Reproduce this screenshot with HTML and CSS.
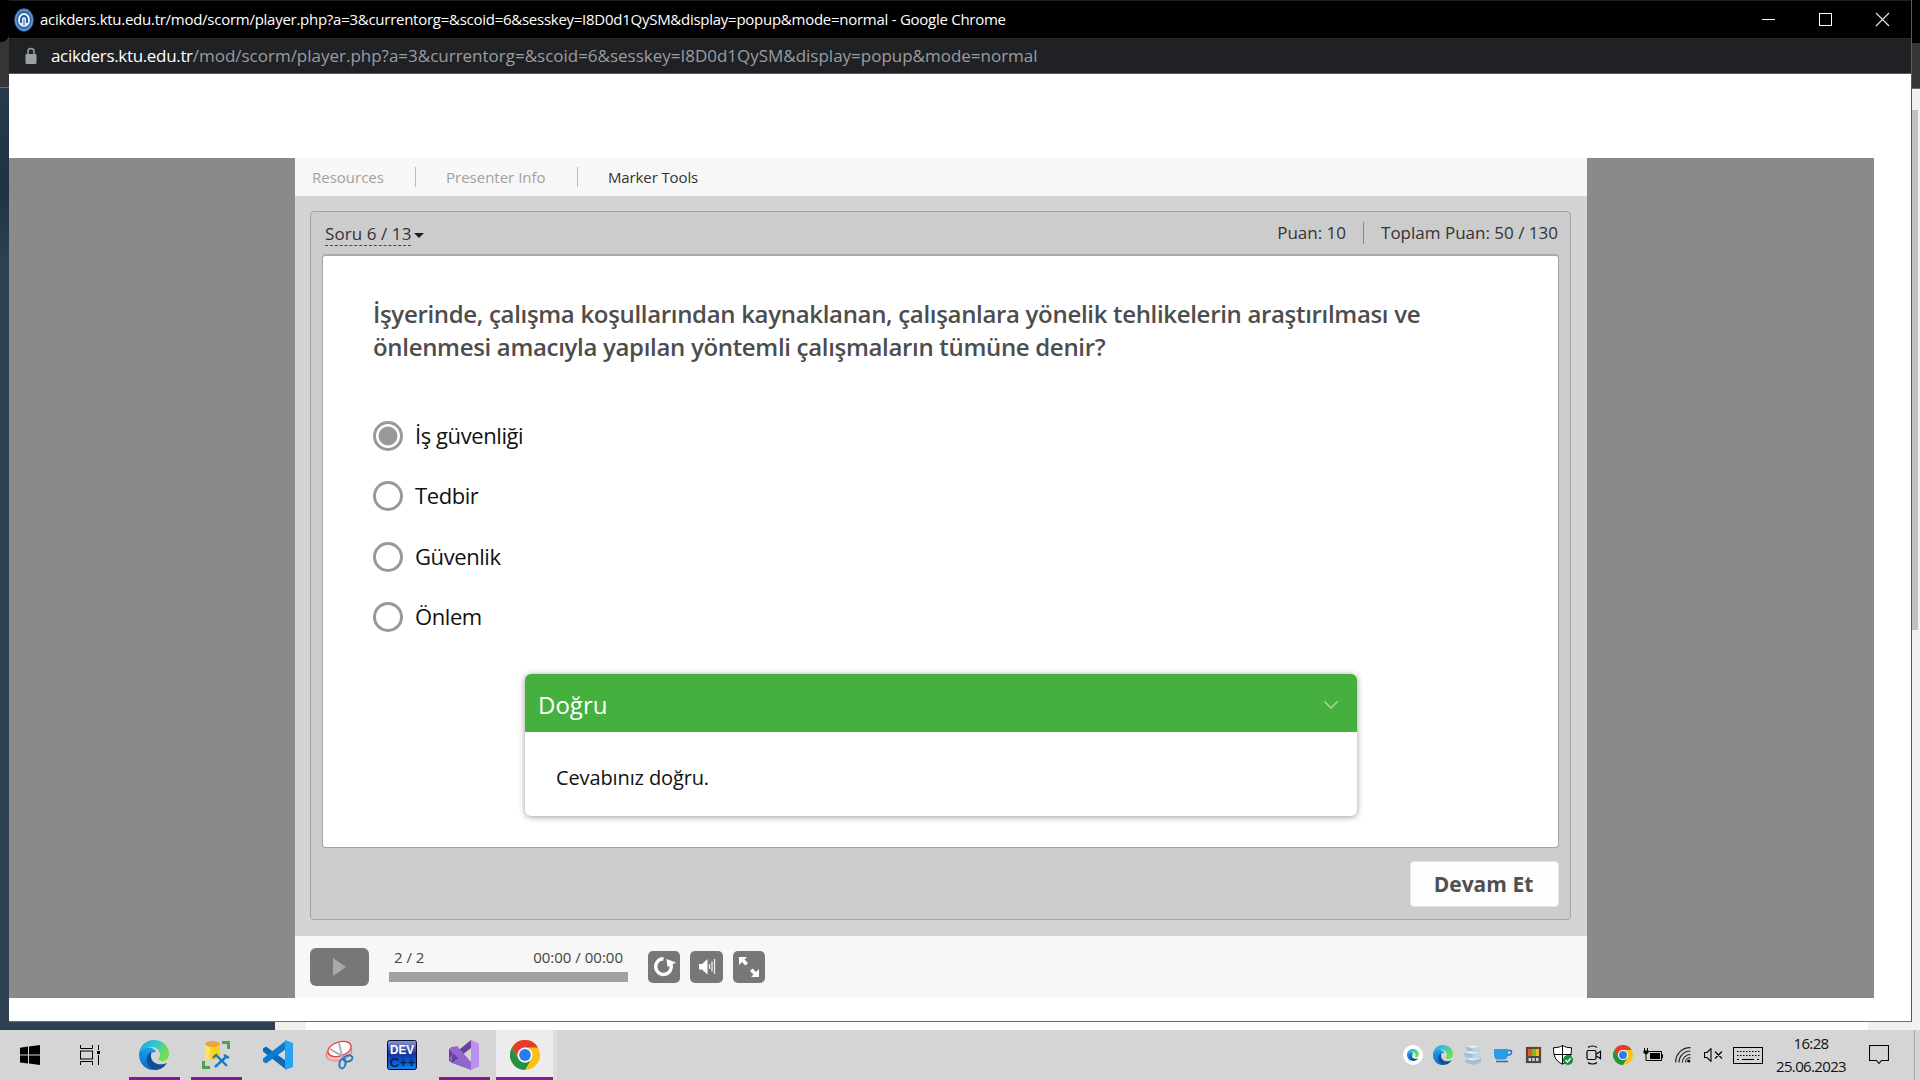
FILE: index.html
```html
<!DOCTYPE html>
<html lang="tr">
<head>
<meta charset="utf-8">
<title>acikders.ktu.edu.tr</title>
<link rel="stylesheet" href="styles.css">
</head>
<body>
<svg width="0" height="0" class="defs" aria-hidden="true">
  <defs>
    <linearGradient id="edgeTop" x1="0" y1="0" x2="1" y2="0.5"><stop offset="0" stop-color="#1d9fdc"/><stop offset="0.5" stop-color="#35c5d3"/><stop offset="1" stop-color="#6fe04c"/></linearGradient>
    <linearGradient id="edgeMid" x1="0" y1="0" x2="0" y2="1"><stop offset="0" stop-color="#1b9fe8"/><stop offset="1" stop-color="#0c6bc4"/></linearGradient>
    <linearGradient id="devBg" x1="0" y1="0" x2="0" y2="1"><stop offset="0" stop-color="#8a95d8"/><stop offset="0.45" stop-color="#1b3191"/><stop offset="0.6" stop-color="#0b46c0"/><stop offset="1" stop-color="#1282f0"/></linearGradient>
    <symbol id="edge" viewBox="0 0 30 30">
      <path d="M15 0C6 0 0.5 6.500 0 14c3-4.500 8-7 12.500-7 5.500 0 8.500 4 8.500 8 0 2-1.500 3-1.500 4 0 1.200 2 2 4.500 2 3.500 0 6-3 6-7C30 6 23.500 0 15 0z" fill="url(#edgeTop)"/>
      <path d="M0 14c-0.300 9 6 16 15 16-5-1.500-7-6-6-10.500 0.800-4 4-7 8-7.500-1-3-4-4.500-7-4.500C5 7.500 0.500 10.500 0 14z" fill="url(#edgeMid)"/>
      <path d="M12 12c-3.500 2-5 6-4 10.500C9 27 12 30 16 30c5 0 9-2.500 12-7-8 3.500-16 0-16-7 0-1.800 0.500-3 0-4z" fill="#114f9a"/>
      <path d="M12 13.500c2-1.800 6-1.500 7 1.500 0.400 1.600-1.300 2.600-0.800 4.200-3-0.200-6.500-2.200-6.200-5.700z" fill="#d6d6d6"/>
    </symbol>
    <symbol id="chrome" viewBox="0 0 30 30">
      <circle cx="15" cy="15" r="15" fill="#fbc116"/>
      <path d="M2 7.500A15 15 0 0 1 28 7.500H15a7.500 7.500 0 0 0-6.500 11.250z" fill="#e33b2e"/>
      <path d="M2 7.500A15 15 0 0 0 15 30l6.500-11.250A7.500 7.500 0 0 1 8.500 18.750z" fill="#229342"/>
      <circle cx="15" cy="15" r="7.500" fill="#fff"/><circle cx="15" cy="15" r="5.900" fill="#2a7af0"/>
    </symbol>
  </defs>
</svg>
<div class="desktop">
  <div class="back-left"><i class="bl-title"></i><i class="bl-bar"></i></div>
  <div class="back-bottom"><i class="bb-blue"></i><i class="bb-grey"></i><i class="bb-white"></i></div>
  <div class="back-right"><i class="br-title"></i><i class="br-bar"></i><i class="br-thumb"></i></div>

  <main class="window">
    <header class="titlebar">
      <svg class="favicon" width="20" height="24" viewBox="0 0 20 24"><ellipse cx="10" cy="12" rx="9.700" ry="11.800" fill="#2d65ad"/><ellipse cx="10" cy="12" rx="8.300" ry="10" fill="none" stroke="#8fb0dc" stroke-width="1"/><ellipse cx="10" cy="12" rx="6" ry="7" fill="#e9f0fa"/><path d="M7 15V11.500a3 3.500 0 0 1 6 0V15" fill="none" stroke="#1f4f92" stroke-width="1.800"/><path d="M10 11.500v6" stroke="#1f4f92" stroke-width="1"/></svg>
      <span class="window-title">acikders.ktu.edu.tr/mod/scorm/player.php?a=3&amp;currentorg=&amp;scoid=6&amp;sesskey=I8D0d1QySM&amp;display=popup&amp;mode=normal - Google Chrome</span>
      <div class="controls">
        <svg width="57" height="37" viewBox="0 0 57 37"><path d="M22 18.500h13" stroke="#fff"/></svg>
        <svg width="57" height="37" viewBox="0 0 57 37"><rect x="22.500" y="12.500" width="12" height="12" fill="none" stroke="#fff"/></svg>
        <svg width="57" height="37" viewBox="0 0 57 37"><path d="M22 12l13 13M35 12l-13 13" stroke="#e8e8e8" stroke-width="1.100"/></svg>
      </div>
    </header>
    <div class="urlbar">
      <svg class="lock" width="12" height="18" viewBox="0 0 12 18"><rect x="0.500" y="7" width="11" height="10" rx="1.200" fill="#9aa0a6"/><path d="M3 7.500V4.500a3 3 0 0 1 6 0v3" fill="none" stroke="#9aa0a6" stroke-width="1.500"/></svg>
      <span class="url"><b>acikders.ktu.edu.tr</b>/mod/scorm/player.php?a=3&amp;currentorg=&amp;scoid=6&amp;sesskey=I8D0d1QySM&amp;display=popup&amp;mode=normal</span>
    </div>
    <section class="page">
      <div class="stage">
        <div class="player">
          <nav class="menu">
            <span class="menu-item m1">Resources</span><i class="sep"></i>
            <span class="menu-item m2">Presenter Info</span><i class="sep"></i>
            <span class="menu-item m3">Marker Tools</span>
          </nav>
          <div class="content">
            <div class="quiz">
              <div class="quiz-head">
                <div class="counter"><span class="counter-text">Soru 6 / 13</span><i class="caret"></i></div>
                <div class="scores"><span class="score">Puan: 10</span><i></i><span class="total">Toplam Puan: 50 / 130</span></div>
              </div>
              <div class="slide">
                <h1 class="question">İşyerinde, çalışma koşullarından kaynaklanan, çalışanlara yönelik tehlikelerin araştırılması ve<br>önlenmesi amacıyla yapılan yöntemli çalışmaların tümüne denir?</h1>
                <div class="options">
                  <div class="option"><i class="radio on"></i><span>İş güvenliği</span></div>
                  <div class="option"><i class="radio"></i><span>Tedbir</span></div>
                  <div class="option"><i class="radio"></i><span>Güvenlik</span></div>
                  <div class="option"><i class="radio"></i><span>Önlem</span></div>
                </div>
                <div class="feedback">
                  <div class="feedback-head"><span>Doğru</span><svg width="14" height="8" viewBox="0 0 14 8"><path d="M0.500 0.500l6.500 6.500 6.500-6.500" fill="none" stroke="#a9dba5" stroke-width="1.300"/></svg></div>
                  <div class="feedback-body"><span>Cevabınız doğru.</span></div>
                </div>
              </div>
              <div class="quiz-foot"><button class="next">Devam Et</button></div>
            </div>
          </div>
          <footer class="playbar">
            <div class="play"><svg width="13" height="18" viewBox="0 0 13 18"><path d="M0 0l13 9-13 9z" fill="#a9a9a9"/></svg></div>
            <div class="progress"><div class="labels"><span>2 / 2</span><span>00:00 / 00:00</span></div><i class="track"></i></div>
            <div class="tools">
              <div class="tool"><svg width="32" height="32" viewBox="0 0 32 32"><path d="M15.500 7.800a7.800 7.800 0 1 0 7.300 5" fill="none" stroke="#fff" stroke-width="3.400"/><path d="M18.500 8l9.500 3.500-8.500 4.500z" fill="#fff"/></svg></div>
              <div class="tool volume"><svg width="32" height="32" viewBox="0 0 32 32"><path d="M9 13h3l5.500-5v15.500l-5.500-5H9z" fill="#fff"/><path d="M19.500 13v5M22 10.500v10M24.500 8v15" stroke="#eee" stroke-width="1.300"/></svg></div>
              <div class="tool"><svg width="32" height="32" viewBox="0 0 32 32"><path d="M6 6h8l-2.500 2.500 3.500 3.500-2.500 2.500L9 11l-3 3zM26 26h-8l2.500-2.500-3.500-3.500 2.500-2.500 3.500 3.500 3-3z" fill="#fff"/></svg></div>
            </div>
          </footer>
        </div>
      </div>
    </section>
  </main>

  <footer class="taskbar">
    <div class="task sys"><svg width="20" height="20" viewBox="0 0 20 20"><path d="M0 2.800L8 1.600V9.500H0zM9 1.400L20 0v9.500H9zM0 10.500h8v8L0 17.400zM9 10.500h11V20L9 18.600z"/></svg></div>
    <div class="task sys"><svg width="20" height="20" viewBox="0 0 20 20"><g fill="none" stroke="#000"><path d="M0.500 0v3.500h12V0M0.500 20v-3.500h12V20M18.500 0v5M18.500 10v10"/><rect x="0.500" y="6" width="12" height="8"/></g><rect x="17" y="6" width="3" height="3"/></svg></div>
    <div class="apps">
      <div class="task open"><svg width="30" height="30"><use href="#edge"/></svg></div>
      <div class="task open"><svg width="30" height="30" viewBox="0 0 30 30"><path d="M4 4h15v14c0 2.800-15 2.800-15 0z" fill="#fbd31b"/><path d="M4 5h5v15c-3-.3-5-1-5-2z" fill="#fbe36d"/><ellipse cx="11.500" cy="4" rx="7.500" ry="3" fill="#efa23f"/><path d="M21 1h8v8h-3V4h-5zM1 21h3v5h5v3H1z" fill="#4da050"/><path d="M15 15l11 11M26 16L14 27M23 15l5 3M12 18l4-4" stroke="#1b76c9" stroke-width="2.400" fill="none"/></svg></div>
      <div class="task"><svg width="30" height="30" viewBox="0 0 30 30"><path d="M0 8.500l3-2L23 21v8.500L0 11.500z" fill="#0a6ab5"/><path d="M0 21.500l3 2L23 9V0.500L0 18.500z" fill="#0b7ccf"/><path d="M22 0l8 3v24l-8 3z" fill="#25a4f3"/></svg></div>
      <div class="task"><svg width="30" height="30" viewBox="0 0 30 30"><g fill="none"><ellipse cx="14" cy="13" rx="13" ry="7.500" transform="rotate(-14 14 13)" fill="#e9c4c4" stroke="#e77878"/><ellipse cx="14.500" cy="9" rx="12" ry="7" transform="rotate(-18 14.500 9)" fill="#fff" stroke="#e04343" stroke-width="1.300"/><path d="M5 9l14 8M14 3l3 13" stroke="#aaa" stroke-width="1.800"/><ellipse cx="23" cy="18.500" rx="4.500" ry="3" transform="rotate(-15 23 18.500)" stroke="#1b7cc4" stroke-width="2"/><ellipse cx="17.500" cy="23.500" rx="3" ry="5" transform="rotate(12 17.500 23.500)" stroke="#1b7cc4" stroke-width="2"/></g></svg></div>
      <div class="task"><svg width="30" height="30" viewBox="0 0 30 30"><rect x="0.500" y="0.500" width="29" height="29" rx="2" fill="url(#devBg)" stroke="#050d2c"/><text x="15" y="13.500" class="dev" fill="#fff" textLength="24" lengthAdjust="spacingAndGlyphs">DEV</text><text x="15.500" y="27" class="dev cpp" fill="#082457" textLength="26" lengthAdjust="spacingAndGlyphs">C++</text></svg></div>
      <div class="task open"><svg width="30" height="30" viewBox="0 0 30 30"><path d="M0 9.500L3 7l19 15v8L3 23l-3-2.500z" fill="#8c68c6"/><path d="M0 9.500l3-2.500v16l-3-2.500zM3 23L22 8V0L0 18z" fill="#67429c"/><path d="M3 7l5-1 14 16v8L0 9.500z" fill="#9467d0"/><path d="M22 0l8 3.500v23L22 30z" fill="#bd8ff0"/></svg></div>
      <div class="task open active"><svg width="30" height="30"><use href="#chrome"/></svg></div>
    </div>
    <div class="tray">
      <div class="t"><svg width="20" height="20" viewBox="0 0 20 20"><circle cx="10" cy="10" r="10" fill="#fff"/><use href="#edge" x="4" y="4" width="12" height="12"/></svg></div>
      <div class="t"><svg width="20" height="20"><use href="#edge"/></svg></div>
      <div class="t"><svg width="18" height="20" viewBox="0 0 18 20"><path d="M2 1.500l8-1.500 6 2-1 4-5 1.500L3 6zM0 7.500l7-1.500 10 1v5l-8 2-8-2zM2 14l8-2 7 1.500v4L9 20l-8-2.500z" fill="#a3bfd3"/><path d="M2 1.500l8-1.500 6 2-7 1.500zM0 7.500l7-1.500 10 1-8 2zM2 14l8-2 7 1.500-8 2z" fill="#e0edf6"/><path d="M9 3.500l7-1.500-1 4-6 1.500zM9 9l8-2v5l-8 2z" fill="#bcd3e2"/></svg></div>
      <div class="t"><svg width="20" height="16" viewBox="0 0 20 16"><path d="M1 2h14v5c0 4-2 5.500-4 5.500H5C2.500 12.500 1 11 1 7z" fill="#2b9de6"/><path d="M15 3.500h2.500c1.500 0 1.500 4-1.500 4.500h-1.500M3 14.500h12" fill="none" stroke="#1678bd" stroke-width="1.500"/></svg></div>
      <div class="t"><svg width="17" height="18" viewBox="0 0 17 18"><rect x="0.500" y="0.500" width="16" height="17" fill="#4a4948" stroke="#dcc5a0"/><path d="M3 3h4v7H3z" fill="#f25325"/><path d="M7 3h3.500v7H7z" fill="#80ba25"/><path d="M10.500 3h3.500v7h-3.500z" fill="#f8b81a"/><path d="M3.500 12h2.500v3H3.500zM7.200 12h2.500v3H7.200zM11 12h2.500v3H11z" fill="#ded7c8"/></svg></div>
      <div class="t"><svg width="20" height="20" viewBox="0 0 20 20"><path d="M9.500 0.500C7 2.200 4 2.700 0.500 2.700c0 7 1 13 9 16.500 8-3.500 9-9.500 9-16.500-3.500 0-6.500-.5-9-2.200z" fill="#fff" stroke="#000"/><path d="M9.500 0v19M1 9.500h17.500" stroke="#000"/><circle cx="15" cy="15" r="5" fill="#168f43"/><path d="M12.500 15l2 2 3.200-3.700" fill="none" stroke="#fff" stroke-width="1.300"/></svg></div>
      <div class="t cam"><svg width="16" height="20" viewBox="0 0 16 20"><g fill="none" stroke="#000" stroke-width="1.200"><rect x="1" y="5.500" width="9" height="9" rx="1.500"/><path d="M10.500 9l4-2.700v7.400l-4-2.700M2 2.500c2-2 7-2 9 0M2 17.500c2 2 7 2 9 0"/></g></svg></div>
      <div class="t"><svg width="20" height="20"><use href="#chrome"/></svg></div>
      <div class="t"><svg width="20" height="14" viewBox="0 0 20 14"><path d="M5.500 3.500h13v9h-13M18.500 6.500h1v3.500h-1" fill="none" stroke="#000"/><rect x="7" y="5" width="10" height="6"/><path d="M1.500 0v3M4.500 0v3M3 6v6.500h3" stroke="#000" fill="none"/><path d="M0.500 2.500h5v2.500L3 6.500.5 5z"/></svg></div>
      <div class="t"><svg width="16" height="16" viewBox="0 0 16 16"><g fill="none" stroke="#222" stroke-width="1.200"><path d="M0.700 15.500C0.500 7 7 0.500 15.500 0.700M4 15.500C4 9 9 4 15.500 4M7.300 15.500c0-4.500 3.700-8 8.200-8M10.500 15.500c0-2.500 2-4.800 5-4.800"/></g><circle cx="13.800" cy="14" r="1.600"/></svg></div>
      <div class="t"><svg width="19" height="14" viewBox="0 0 19 14"><path d="M0.500 4.500H3L7 0.700v12.600L3 9.500H0.500zM11 3.500l7 7M18 3.500l-7 7" fill="none" stroke="#000" stroke-width="1.100"/></svg></div>
      <div class="t kb"><svg width="30" height="17" viewBox="0 0 30 17"><rect x="0.500" y="0.500" width="29" height="16" fill="none" stroke="#000"/><path d="M4 4.500h23M4 8.500h23" stroke="#000" stroke-dasharray="1.500 1.500"/><path d="M4 12.500h2M9 12.500h12M24 12.500h2" stroke="#000"/></svg></div>
      <div class="clock"><span class="time">16:28</span><span class="date">25.06.2023</span></div>
      <div class="t note"><svg width="20" height="20" viewBox="0 0 20 20"><path d="M0.500 0.500h19v15h-7L10 18.500 7.500 15.500h-7z" fill="none" stroke="#000" stroke-width="1.100"/></svg></div>
      <i class="peek"></i>
    </div>
  </footer>
</div>
</body>
</html>
```
FILE: styles.css
```css
* { box-sizing: border-box; }
body { margin: 0; overflow: hidden; font-family: "Open Sans", "Noto Sans", sans-serif; }
span { white-space: nowrap; }
i { display: block; flex: none; }
svg { display: block; flex: none; }
.defs { position: absolute; }

.desktop { position: relative; width: 1920px; height: 1080px; background: #fff; display: flex; flex-direction: column; justify-content: flex-end; }

/* the windows behind the popup */
.back-left { position: absolute; left: 0; top: 0; width: 9px; height: 1030px; background: linear-gradient(#2b4153, #213242 190px, #2b4053 260px, #2f4050); }
.bl-title { height: 42px; background: #000; border-radius: 0 0 8px 0; }
.bl-bar { height: 46px; background: #353535; border-bottom: 1px solid #6b6b6b; }
.back-bottom { position: absolute; left: 0; top: 1021px; width: 1920px; height: 9px; display: flex; background: #f0f0f0; }
.bb-blue { width: 275px; background: #2f4050; }
.bb-grey { width: 31px; }
.bb-white { width: 1562px; background: #fff; }
.back-right { position: absolute; right: 0; top: 0; width: 9px; height: 1030px; background: #f1f1f1; }
.br-title { height: 43px; background: #000; }
.br-bar { height: 46px; background: #353535; border-bottom: 1px solid #6b6b6b; }
.br-thumb { width: 7px; height: 520px; margin-top: 21px; background: #c1c1c1; }

/* popup window */
.window { position: absolute; left: 9px; top: 0; width: 1903px; height: 1022px; display: flex; flex-direction: column; background: #fff; border-right: 1px solid #5a5a5a; border-bottom: 1px solid #6c6c6c; }
.titlebar { height: 38px; background: #000; border-top: 1px solid #1f1f1f; display: flex; align-items: center; flex: none; padding-left: 5px; }
.favicon { margin-right: 6px; }
.window-title { color: #fff; font-size: 15px; line-height: 36px; padding-bottom: 2px; letter-spacing: -0.264px; }
.controls { display: flex; margin-left: auto; }
.urlbar { height: 36px; background: #202124; border-top: 1px solid #2b2b2b; border-bottom: 1px solid #5c5c5c; display: flex; align-items: center; flex: none; padding-left: 16px; }
.lock { margin-right: 14px; }
.url { color: #9a9da1; font-size: 17px; padding-bottom: 2px; letter-spacing: -0.010px; }
.url b { color: #fff; font-weight: 400; letter-spacing: -0.330px; }
.page { padding-top: 84px; }
.stage { width: 1865px; height: 840px; padding-left: 286px; background: #8a8a8a; }

.player { width: 1292px; height: 840px; display: flex; flex-direction: column; background: #d4d4d4; }
.menu { height: 38px; background: #f7f7f7; display: flex; align-items: center; padding-left: 17px; font-size: 15px; color: #a0a0a0; }
.menu .sep { width: 1px; height: 20px; background: #bbb; }
.m1 { width: 103px; }
.m2 { width: 161px; padding-left: 30px; }
.m3 { padding-left: 30px; color: #333; letter-spacing: -0.120px; }
.content { height: 740px; padding: 15px 16px 15px 15px; }
.quiz { height: 709px; background: #ccc; border: 1px solid #a2a2a2; border-radius: 4px; padding: 0 11px; display: flex; flex-direction: column; }
.quiz-head { height: 42px; display: flex; justify-content: space-between; color: #333; font-size: 17px; padding: 0 1px 0 3px; }
.counter { display: flex; align-items: flex-start; padding-top: 10px; }
.counter-text { line-height: 24px; height: 24px; border-bottom: 1px dashed #444; letter-spacing: 0.080px; }
.caret { margin: 11px 0 0 3px; border: 5px solid transparent; border-top: 5px solid #1c1c1c; border-bottom: 0; }
.scores { display: flex; align-items: center; }
.scores span { padding-bottom: 2px; }
.scores i { width: 1px; height: 22px; background: #888; margin: 0 17px; }
.slide { height: 594px; background: #fff; border: 1px solid #a4a4a4; border-top: 2px solid #aaa; border-radius: 4px; padding: 41px 50px 0; }
.question { margin: 0; font-size: 24px; line-height: 33px; font-weight: 600; letter-spacing: -0.320px; color: #4d4d4d; white-space: nowrap; }
.options { margin-top: 42.500px; font-size: 22px; letter-spacing: -0.420px; color: #111; }
.option { height: 60.500px; display: flex; align-items: center; gap: 12px; }
.option span { padding-bottom: 2px; }
.radio { width: 30px; height: 30px; border: 3px solid #999; border-radius: 50%; background: #fff; }
.radio.on { background: radial-gradient(circle, #999 9px, #fff 9.800px); }
.feedback { width: 832px; height: 142px; margin: 26.500px 0 0 152px; border-radius: 6px; box-shadow: 0 1px 6px rgba(0,0,0,.4); overflow: hidden; background: #fff; }
.feedback-head { height: 58px; background: #46b03e; color: #fff; font-size: 24px; display: flex; align-items: center; justify-content: space-between; padding: 3px 19px 0 13px; }
.feedback-body { padding: 31px 0 0 31px; font-size: 20px; line-height: 30px; letter-spacing: -0.120px; color: #111; }
.quiz-foot { display: flex; justify-content: flex-end; padding-top: 13px; }
.next { width: 149px; height: 46px; background: #fdfdfd; border: 1px solid #e6e6e6; border-radius: 4px; font: 700 21px "Open Sans", sans-serif; color: #505050; padding: 0 2px 0 0; }

.playbar { height: 62px; background: #f7f7f7; display: flex; padding: 12px 15px; }
.play { width: 59px; height: 38px; background: #777; border-radius: 6px; display: flex; align-items: center; justify-content: center; }
.progress { width: 239px; margin: -1px 20px 0; }
.labels { display: flex; justify-content: space-between; padding: 0 5px; font-size: 15px; line-height: 21px; height: 25px; color: #444; }
.track { height: 10px; background: #a1a1a1; }
.tools { display: flex; gap: 10px; padding-top: 3px; }
.tool { width: 32px; height: 32px; background: #777; border-radius: 5px; }
.tool.volume { width: 33px; }

.taskbar { height: 50px; background: #d5d5d5; display: flex; flex: none; position: relative; }
.task { width: 62px; height: 50px; display: flex; align-items: center; justify-content: center; background-repeat: no-repeat; }
.task.sys { width: 60px; }
.apps { display: flex; margin-left: 3px; }
.open { background-image: linear-gradient(#84189b, #84189b); background-size: 51px 3px; background-position: 6px 47px; }
.active { background-color: #ececec; width: 61px; margin-left: 1px; padding-left: 1px; background-size: 57px 3px; background-position: 0 47px; border-right: 4px solid #dcdcdc; }
.dev { font: 700 13px "Liberation Sans", sans-serif; text-anchor: middle; }
.cpp { font-size: 12px; }
.tray { display: flex; margin-left: auto; width: 522px; align-items: center; }
.t { width: 30px; height: 50px; display: flex; align-items: center; justify-content: center; flex: none; }
.cam { padding-left: 2px; }
.kb { width: 40px; }
.clock { width: 86px; display: flex; flex-direction: column; align-items: center; font-size: 15px; line-height: 23px; color: #111; letter-spacing: -0.650px; }
.note { width: 50px; }
.peek { width: 1px; height: 50px; margin-left: 10px; background: #aaa; }
```
